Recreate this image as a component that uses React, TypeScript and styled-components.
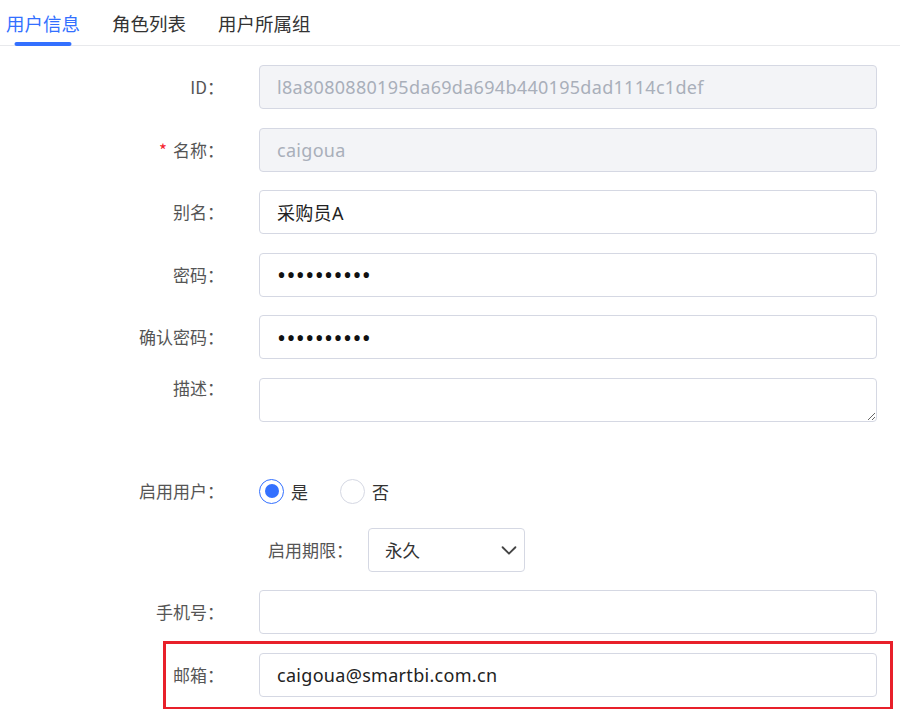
import React from "react";
import styled, { createGlobalStyle } from "styled-components";

const Global = createGlobalStyle`
  html, body { margin: 0; padding: 0; background: #fff; }
  body { font-family: "Noto Sans", "Noto Sans CJK SC", sans-serif; }
  * { box-sizing: border-box; }
`;

const Page = styled.div`
  width: 900px;
  height: 709px;
  overflow: hidden;
  background: #fff;
`;

const TabBar = styled.div`
  display: flex;
  align-items: stretch;
  height: 46px;
  border-bottom: 1px solid #e8e9ec;
  padding-left: 6px;
  gap: 32px;
`;

const Tab = styled.div<{ $active?: boolean }>`
  position: relative;
  display: flex;
  align-items: center;
  padding-top: 1px;
  font-family: "Noto Sans CJK SC", sans-serif;
  font-size: 18.5px;
  color: ${(p) => (p.$active ? "#3370ff" : "#333")};
  &::after {
    content: "";
    display: ${(p) => (p.$active ? "block" : "none")};
    position: absolute;
    left: 50%;
    transform: translateX(-50%);
    bottom: -1px;
    width: 57px;
    height: 4px;
    border-radius: 2px;
    background: #3370ff;
  }
`;

const Form = styled.div`
  display: flex;
  flex-direction: column;
  gap: 18.5px;
  padding: 19px 23px 0 0;
`;

const Row = styled.div<{ $top?: boolean; $mt?: number; $h?: number }>`
  position: relative;
  display: flex;
  align-items: ${(p) => (p.$top ? "flex-start" : "center")};
  margin-top: ${(p) => p.$mt ?? 0}px;
  height: ${(p) => (p.$h ? `${p.$h}px` : "auto")};
`;

const Label = styled.div`
  width: 224px;
  flex: none;
  text-align: right;
  font-family: "Noto Sans CJK SC", sans-serif;
  font-size: 17px;
  color: #555;
  margin-right: 35px;
  line-height: 20px;
`;

const Star = styled.span`
  color: #f5222d;
  margin-right: 6px;
`;

const TextInput = styled.input`
  flex: 1;
  height: 44px;
  border: 1px solid #d5d8e3;
  border-radius: 4px;
  padding: 0 17px;
  font-family: "Noto Sans", "Noto Sans CJK SC", sans-serif;
  font-size: 18px;
  letter-spacing: 0.3px;
  color: #222;
  background: #fff;
  outline: none;
  &:disabled {
    background: #f3f4f7;
    color: #a9afba;
  }
  &[type="password"] {
    letter-spacing: 0.4px;
    font-size: 24px;
    color: #111;
  }
`;

const TextArea = styled.textarea`
  flex: 1;
  height: 44px;
  border: 1px solid #d5d8e3;
  border-radius: 4px;
  padding: 8px 17px;
  font-family: "Noto Sans", "Noto Sans CJK SC", sans-serif;
  font-size: 17px;
  outline: none;
  resize: vertical;
`;

const RadioGroup = styled.div`
  display: flex;
  align-items: center;
  gap: 32px;
`;

const RadioItem = styled.label`
  display: flex;
  align-items: center;
  gap: 7px;
  font-family: "Noto Sans CJK SC", sans-serif;
  font-size: 17px;
  color: #333;
`;

const RadioCircle = styled.span<{ $checked?: boolean }>`
  width: 25px;
  height: 25px;
  border-radius: 50%;
  border: 1px solid ${(p) => (p.$checked ? "#3370ff" : "#d5d8e3")};
  display: flex;
  align-items: center;
  justify-content: center;
  background: #fff;
  &::after {
    content: "";
    display: ${(p) => (p.$checked ? "block" : "none")};
    width: 14px;
    height: 14px;
    border-radius: 50%;
    background: #3370ff;
  }
`;

const SubRow = styled.div`
  display: flex;
  align-items: center;
  padding-left: 268px;
`;

const SubLabel = styled.div`
  font-family: "Noto Sans CJK SC", sans-serif;
  font-size: 17px;
  color: #555;
  margin-right: 15px;
  line-height: 20px;
`;

const SelectBox = styled.div`
  width: 157px;
  height: 44px;
  border: 1px solid #d5d8e3;
  border-radius: 4px;
  display: flex;
  align-items: center;
  justify-content: space-between;
  padding: 0 4px 0 16px;
  font-family: "Noto Sans CJK SC", sans-serif;
  font-size: 17.5px;
  color: #333;
`;

const Highlight = styled.div`
  position: absolute;
  left: 163px;
  right: -16px;
  top: -12px;
  bottom: -13px;
  border: 3.5px solid #e8202a;
  pointer-events: none;
`;

const Chevron = () => (
  <svg width="22" height="22" viewBox="0 0 24 24" fill="none" stroke="#444" strokeWidth="2" strokeLinecap="round" strokeLinejoin="round">
    <path d="M5 9l7 7 7-7" />
  </svg>
);

export default function App() {
  return (
    <Page>
      <Global />
      <TabBar>
        <Tab $active>用户信息</Tab>
        <Tab>角色列表</Tab>
        <Tab>用户所属组</Tab>
      </TabBar>
      <Form>
        <Row>
          <Label>ID：</Label>
          <TextInput disabled value="l8a8080880195da69da694b440195dad1114c1def" readOnly />
        </Row>
        <Row>
          <Label>
            <Star>*</Star>名称：
          </Label>
          <TextInput disabled value="caigoua" readOnly />
        </Row>
        <Row>
          <Label>别名：</Label>
          <TextInput value="采购员A" readOnly />
        </Row>
        <Row>
          <Label>密码：</Label>
          <TextInput type="password" value="1234567890" readOnly />
        </Row>
        <Row>
          <Label>确认密码：</Label>
          <TextInput type="password" value="1234567890" readOnly />
        </Row>
        <Row $top>
          <Label>描述：</Label>
          <TextArea readOnly />
        </Row>
        <Row $mt={33} $h={36}>
          <Label>启用用户：</Label>
          <RadioGroup>
            <RadioItem>
              <RadioCircle $checked />是
            </RadioItem>
            <RadioItem>
              <RadioCircle />否
            </RadioItem>
          </RadioGroup>
        </Row>
        <SubRow>
          <SubLabel>启用期限：</SubLabel>
          <SelectBox>
            永久
            <Chevron />
          </SelectBox>
        </SubRow>
        <Row>
          <Label>手机号：</Label>
          <TextInput value="" readOnly />
        </Row>
        <Row>
          <Label>邮箱：</Label>
          <TextInput value="caigoua@smartbi.com.cn" readOnly />
          <Highlight />
        </Row>
      </Form>
    </Page>
  );
}
